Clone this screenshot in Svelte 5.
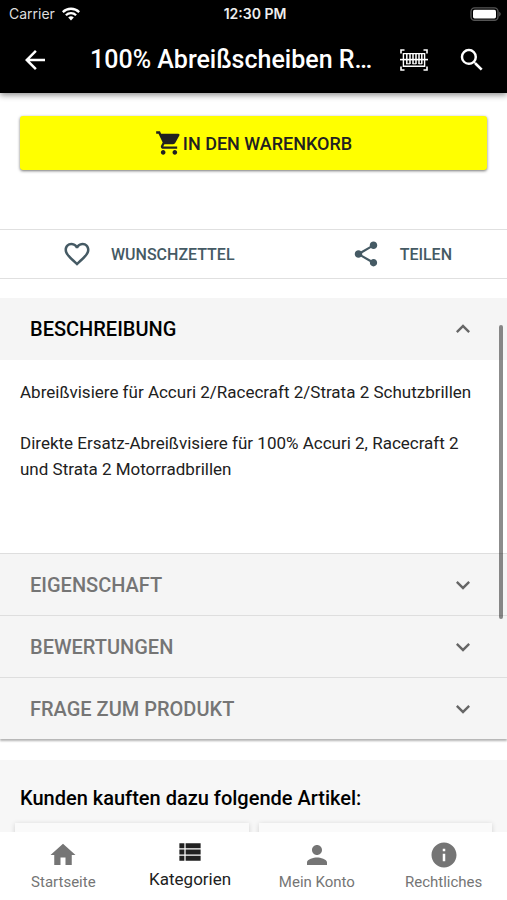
<script>
  let sections = $state([
    { title: 'BESCHREIBUNG', open: true },
    { title: 'EIGENSCHAFT', open: false },
    { title: 'BEWERTUNGEN', open: false },
    { title: 'FRAGE ZUM PRODUKT', open: false }
  ]);

  const tabs = [
    { label: 'Startseite', path: 'M10 20v-6h4v6h5v-8h3L12 3 2 12h3v8z' },
    {
      label: 'Kategorien',
      active: true,
      path: 'M3.5 14h4v-4h-4v4zm0 5h4v-4h-4v4zm0-10h4V5h-4v4zm5 5h12v-4h-12v4zm0 5h12v-4h-12v4zm0-14v4h12V5h-12z'
    },
    {
      label: 'Mein Konto',
      path: 'M12 12c2.21 0 4-1.79 4-4s-1.79-4-4-4-4 1.79-4 4 1.79 4 4 4zm0 2c-2.67 0-8 1.34-8 4v2h16v-2c0-2.66-5.33-4-8-4z'
    },
    {
      label: 'Rechtliches',
      path: 'M12 2C6.48 2 2 6.48 2 12s4.48 10 10 10 10-4.48 10-10S17.52 2 12 2zm1 15h-2v-6h2v6zm0-8h-2V7h2v2z'
    }
  ];
</script>

<div class="app">
  <header>
    <div class="status">
      <span class="carrier">
        Carrier
        <svg width="18" height="14" viewBox="0 0 18 14" fill="none" stroke="#fff" stroke-width="2.3">
          <path d="M.8 5.1a11.7 11.7 0 0 1 16.4 0" />
          <path d="M3.9 8.3a7.2 7.2 0 0 1 10.2 0" />
          <path d="M9 13.4 6.2 10.5a4 4 0 0 1 5.6 0z" fill="#fff" stroke="none" />
        </svg>
      </span>
      <span class="time">12:30 PM</span>
      <span class="battery">
        <svg width="31" height="14" viewBox="0 0 31 14">
          <rect x="1" y=".9" width="27" height="12.4" rx="3.6" fill="none" stroke="#555" stroke-width="1.4" />
          <rect x="3" y="2.8" width="23" height="8.6" rx="1.6" fill="#fff" />
          <path d="M29.2 4.8c2 .8 2 3.8 0 4.6z" fill="#555" />
        </svg>
      </span>
    </div>
    <div class="toolbar">
      <button class="icon" aria-label="Zurück">
        <svg width="30" height="30" viewBox="0 0 24 24"><path d="M20 11H7.83l5.59-5.59L12 4l-8 8 8 8 1.41-1.41L7.83 13H20z" /></svg>
      </button>
      <h1>100% Abreißscheiben R…</h1>
      <button class="icon barcode" aria-label="Barcode scannen">
        <svg width="30" height="24" viewBox="0 0 30 24" fill="none" stroke="#fff">
          <path stroke-width="1.6" d="M2 5.5V2h3.5M24.5 2H28v3.5M2 18.5V22h3.5M24.5 22H28v-3.5" />
          <path stroke-width="1.4" d="M4.4 5.6h21.2v12.6H4.4z" />
          <path stroke-width="1.5" d="M7.8 6v10M11 6v10M14 6v10M17 6v10M20 6v10M22.8 6v10" />
          <path stroke-width="1" d="M7 15.8h4M13.6 15.8h3.6M19.6 15.8h3.4" />
          <path stroke-width="1.6" d="M1 11.6h28" />
        </svg>
      </button>
      <button class="icon" aria-label="Suchen">
        <svg width="30" height="30" viewBox="0 0 24 24"><path d="M15.5 14h-.79l-.28-.27A6.471 6.471 0 0 0 16 9.5 6.5 6.5 0 1 0 9.5 16c1.61 0 3.09-.59 4.23-1.57l.27.28v.79l5 4.99L20.49 19l-4.99-5zm-6 0C7.01 14 5 11.99 5 9.5S7.01 5 9.5 5 14 7.01 14 9.5 11.99 14 9.5 14z" /></svg>
      </button>
    </div>
  </header>

  <div class="viewport">
    <main>
      <button class="cart">
        <svg width="28" height="28" viewBox="0 0 24 24"><path d="M7 18c-1.1 0-1.99.9-1.99 2S5.9 22 7 22s2-.9 2-2-.9-2-2-2zM1 2v2h2l3.6 7.59-1.35 2.45c-.16.28-.25.61-.25.96 0 1.1.9 2 2 2h12v-2H7.42c-.14 0-.25-.11-.25-.25l.03-.12.9-1.63h7.45c.75 0 1.41-.41 1.75-1.03l3.58-6.49A1.003 1.003 0 0 0 20 4H5.21l-.94-2H1zm16 16c-1.1 0-1.99.9-1.99 2s.89 2 1.99 2 2-.9 2-2-.9-2-2-2z" /></svg>
        IN DEN WARENKORB
      </button>

      <div class="actions">
        <button>
          <svg width="30" height="30" viewBox="0 0 24 24"><path d="M16.5 3c-1.74 0-3.41.81-4.5 2.09C10.91 3.81 9.24 3 7.5 3 4.42 3 2 5.42 2 8.5c0 3.78 3.4 6.86 8.55 11.54L12 21.35l1.45-1.32C18.6 15.36 22 12.28 22 8.5 22 5.42 19.58 3 16.5 3zm-4.4 15.55-.1.1-.1-.1C7.14 14.24 4 11.39 4 8.5 4 6.5 5.5 5 7.5 5c1.54 0 3.04.99 3.57 2.36h1.87C13.46 5.99 14.96 5 16.5 5c2 0 3.5 1.5 3.5 3.5 0 2.89-3.14 5.74-7.9 10.05z" /></svg>
          WUNSCHZETTEL
        </button>
        <button>
          <svg width="30" height="30" viewBox="0 0 24 24"><path d="M18 16.08c-.76 0-1.44.3-1.96.77L8.91 12.7c.05-.23.09-.46.09-.7s-.04-.47-.09-.7l7.05-4.11c.54.5 1.25.81 2.04.81 1.66 0 3-1.34 3-3s-1.34-3-3-3-3 1.34-3 3c0 .24.04.47.09.7L8.04 9.81C7.5 9.31 6.79 9 6 9c-1.66 0-3 1.34-3 3s1.34 3 3 3c.79 0 1.5-.31 2.04-.81l7.12 4.16c-.05.21-.08.43-.08.65 0 1.61 1.31 2.92 2.92 2.92s2.92-1.31 2.92-2.92-1.31-2.92-2.92-2.92z" /></svg>
          TEILEN
        </button>
      </div>

      <div class="accordion">
        {#each sections as section, i}
          <section>
            <h2>
              <button class:open={section.open} aria-expanded={section.open} onclick={() => (section.open = !section.open)}>
                {section.title}
                <svg width="28" height="28" viewBox="0 0 24 24"><path d="M7.41 8.59 12 13.17l4.59-4.58L18 10l-6 6-6-6z" /></svg>
              </button>
            </h2>
            {#if i === 0 && section.open}
              <div class="body">
                <p>Abreißvisiere für Accuri 2/Racecraft 2/Strata 2 Schutzbrillen</p>
                <p>Direkte Ersatz-Abreißvisiere für 100% Accuri 2, Racecraft 2 und Strata 2 Motorradbrillen</p>
              </div>
            {/if}
          </section>
        {/each}
      </div>

      <div class="related">
        <h3>Kunden kauften dazu folgende Artikel:</h3>
        <div class="cards">
          <article></article>
          <article></article>
        </div>
      </div>
    </main>
    <div class="thumb"></div>
  </div>

  <nav>
    {#each tabs as tab}
      <a href="#{tab.label}" class:active={tab.active}>
        <svg width="30" height="30" viewBox="0 0 24 24"><path d={tab.path} /></svg>
        <span>{tab.label}</span>
      </a>
    {/each}
  </nav>
</div>

<style>
  :global(body) { margin: 0; background: #fff; }
  .app {
    display: flex;
    flex-direction: column;
    height: 100vh;
    font-family: Roboto, sans-serif;
    color: #212121;
  }
  button {
    font: inherit;
    color: inherit;
    background: none;
    border: 0;
    padding: 0;
    margin: 0;
    cursor: pointer;
  }
  svg { display: block; flex: none; fill: currentColor; }
  h1, h2, h3, p { margin: 0; }

  header {
    position: relative;
    z-index: 1;
    background: #000;
    color: #fff;
    box-shadow: 0 2px 6px rgba(0, 0, 0, .45);
  }
  .status {
    display: grid;
    grid-template-columns: 1fr auto 1fr;
    align-items: center;
    height: 27px;
    padding: 0 6px 0 9px;
    font: 14px/20px Inter, sans-serif;
  }
  .carrier { display: flex; align-items: center; gap: 7px; color: #ddd; }
  .carrier svg, .barcode svg { fill: none; }
  .time { font-weight: 600; color: #eee; }
  .battery { justify-self: end; }
  .toolbar { display: flex; align-items: center; height: 66px; padding: 0 20px; }
  .icon { flex: none; }
  h1 {
    flex: 1;
    min-width: 0;
    margin: 0 20px 0 40px;
    font-size: 25px;
    line-height: 32px;
    font-weight: 500;
    white-space: nowrap;
    overflow: hidden;
    text-overflow: ellipsis;
  }
  .icon + .icon { margin-left: 28px; }

  .viewport { position: relative; flex: 1; min-height: 0; }
  main { height: 100%; overflow-y: auto; scrollbar-width: none; }
  .thumb {
    position: absolute;
    top: 232px;
    right: 4px;
    width: 4px;
    height: 294px;
    border-radius: 2px;
    background: rgba(0, 0, 0, .45);
  }

  .cart {
    display: flex;
    align-items: center;
    justify-content: center;
    width: calc(100% - 40px);
    height: 54px;
    margin: 23px 20px 59px;
    border-radius: 3px;
    background: #ff0;
    box-shadow: 0 1px 3px rgba(0, 0, 0, .55);
    font-size: 18px;
    font-weight: 500;
  }
  .actions {
    display: flex;
    justify-content: space-between;
    height: 48px;
    padding: 0 55px 0 62px;
    border-top: 1px solid #e0e0e0;
    border-bottom: 1px solid #e0e0e0;
    color: #455a64;
    font-size: 16px;
    font-weight: 500;
  }
  .actions button { display: flex; align-items: center; gap: 19px; }

  .accordion { margin-top: 19px; box-shadow: 0 2px 2px rgba(0, 0, 0, .3); }
  section + section { border-top: 1px solid #dedede; }
  h2 { font-size: 20px; font-weight: 500; }
  h2 button {
    display: flex;
    align-items: center;
    justify-content: space-between;
    width: 100%;
    height: 61px;
    padding: 0 30px;
    background: #f5f5f5;
    color: #757575;
  }
  h2 button.open { height: 62px; color: #000; }
  h2 svg { color: #666; }
  h2 .open svg { transform: rotate(180deg); }
  .body {
    padding: 19px 20px 71px;
    background: #fff;
    font-size: 17px;
    line-height: 26px;
  }
  .body p + p { margin-top: 25px; }

  .related { margin-top: 21px; padding: 25px 15px; background: #f7f7f7; }
  h3 {
    padding: 0 5px;
    font-size: 20px;
    line-height: 26px;
    font-weight: 500;
    color: #000;
  }
  .cards { display: grid; grid-template-columns: 1fr 1fr; gap: 10px; margin-top: 12px; }
  article { height: 240px; background: #fafafa; box-shadow: 0 1px 5px rgba(0, 0, 0, .16); }

  nav {
    position: relative;
    display: grid;
    grid-template-columns: repeat(4, 1fr);
    height: 68px;
    background: #fff;
  }
  nav a {
    display: flex;
    flex-direction: column;
    align-items: center;
    gap: 2px;
    padding-top: 8px;
    color: #757575;
    font-size: 15px;
    line-height: 20px;
    text-decoration: none;
  }
  nav .active { padding-top: 5px; color: #212121; font-size: 17px; }
</style>
